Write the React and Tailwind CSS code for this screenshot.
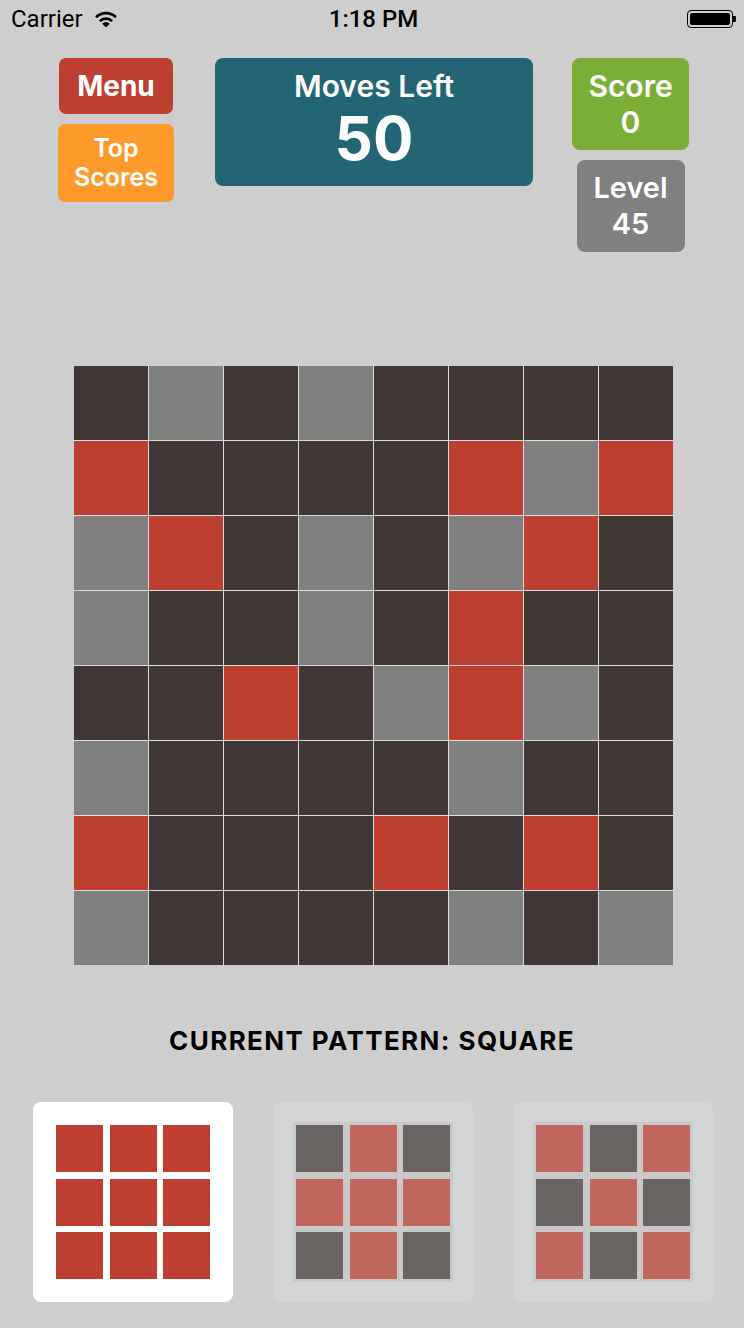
const D = 'bg-[#403735]';
const G = 'bg-[#808080]';
const R = 'bg-[#bc3f31]';

const board = [
  'DGDGDDDD',
  'RDDDDRGR',
  'GRDGDGRD',
  'GDDGDRDD',
  'DDRDGRGD',
  'GDDDDGDD',
  'RDDDRDRD',
  'GDDDDGDG',
];

const cellClass = { D, G, R };

const patterns = [
  { active: true, rows: ['RRR', 'RRR', 'RRR'] },
  { active: false, rows: ['DRD', 'RRR', 'DRD'] },
  { active: false, rows: ['RDR', 'DRD', 'RDR'] },
];

const Wifi = () => (
  <svg width="24" height="18" viewBox="0 0 22 17" className="ml-[11px]">
    <path d="M11 16.5 L7.4 12.9 A5 5 0 0 1 14.6 12.9 Z" fill="#000" />
    <path d="M5.2 10.5 A8.2 8.2 0 0 1 16.8 10.5" stroke="#000" strokeWidth="2.6" fill="none" />
    <path d="M1.6 6.8 A13.2 13.2 0 0 1 20.4 6.8" stroke="#000" strokeWidth="2.6" fill="none" />
  </svg>
);

const Battery = () => (
  <div className="flex items-center">
    <div className="w-[46px] h-[18px] rounded-[4px] border border-black p-[2px]">
      <div className="w-full h-full bg-black rounded-[2px]" />
    </div>
    <div className="w-[3px] h-[6px] bg-black rounded-r-[1px]" />
  </div>
);

const PatternCard = ({ active, rows }) => {
  const on = active ? 'bg-[#bc3f31]' : 'bg-[#c0675d]';
  const off = 'bg-[#6a6562]';
  return (
    <div
      className={`w-[200px] h-[200px] rounded-[8px] p-[20px] ${active ? 'bg-white' : 'bg-[#d3d4d6]'}`}
    >
      <div className={`w-[160px] h-[160px] p-[3px] flex flex-col justify-between ${active ? 'bg-white' : 'bg-[#c9c9c9]'}`}>
        {rows.map((row, i) => (
          <div key={i} className="flex justify-between">
            {row.split('').map((c, j) => (
              <div key={j} className={`w-[47px] h-[47px] ${c === 'R' ? on : off}`} />
            ))}
          </div>
        ))}
      </div>
    </div>
  );
};

export default function App() {
  return (
    <div className="w-[744px] h-[1328px] bg-[#cecece] font-['Inter',sans-serif] overflow-hidden">
      {/* Status bar */}
      <div className="h-[38px] px-[11px] flex items-center justify-between text-black">
        <div className="flex items-center w-[180px] text-[24px] font-['Roboto',sans-serif]">
          Carrier
          <Wifi />
        </div>
        <div className="text-[24px] font-medium font-['Roboto',sans-serif]">1:18 PM</div>
        <div className="w-[180px] flex justify-end -mr-[3px]">
          <Battery />
        </div>
      </div>

      {/* Header */}
      <div className="flex items-start pt-[20px] pl-[58px] text-white font-semibold">
        <div className="w-[116px] flex flex-col items-center gap-[10px]">
          <div className="w-[114px] h-[56px] rounded-[7px] bg-[#bc3f31] flex items-center justify-center text-[28px] font-bold">
            Menu
          </div>
          <div className="w-[116px] h-[78px] rounded-[7px] bg-[#fd9a2a] flex flex-col items-center justify-center text-[25px] leading-[29px]">
            <span>Top</span>
            <span>Scores</span>
          </div>
        </div>
        <div className="ml-[41px] w-[318px] h-[128px] rounded-[8px] bg-[#236574] flex flex-col items-center pt-[10px]">
          <div className="text-[30px] leading-[36px]">Moves Left</div>
          <div className="text-[60px] leading-[68px] font-bold">50</div>
        </div>
        <div className="ml-[39px] w-[117px] flex flex-col items-center gap-[10px]">
          <div className="w-[117px] h-[92px] rounded-[8px] bg-[#7bad37] flex flex-col items-center justify-center text-[30px] leading-[36px]">
            <span>Score</span>
            <span>0</span>
          </div>
          <div className="w-[108px] h-[92px] rounded-[8px] bg-[#808080] flex flex-col items-center justify-center text-[29px] leading-[36px]">
            <span>Level</span>
            <span>45</span>
          </div>
        </div>
      </div>

      {/* Board */}
      <div className="mt-[114px] flex justify-center">
        <div className="grid grid-cols-[repeat(8,74px)] gap-px bg-[#dcdcdc] ml-[3px]">
          {board.flatMap((row, i) =>
            row.split('').map((c, j) => (
              <div key={`${i}-${j}`} className={`h-[74px] ${cellClass[c]}`} />
            ))
          )}
        </div>
      </div>

      {/* Pattern title */}
      <div className="mt-[58px] text-center text-[26px] font-bold tracking-[1.4px] text-black leading-[36px]">
        CURRENT PATTERN: SQUARE
      </div>

      {/* Patterns */}
      <div className="mt-[43px] flex justify-center gap-[40px] ml-[2px]">
        {patterns.map((p, i) => (
          <PatternCard key={i} {...p} />
        ))}
      </div>
    </div>
  );
}
